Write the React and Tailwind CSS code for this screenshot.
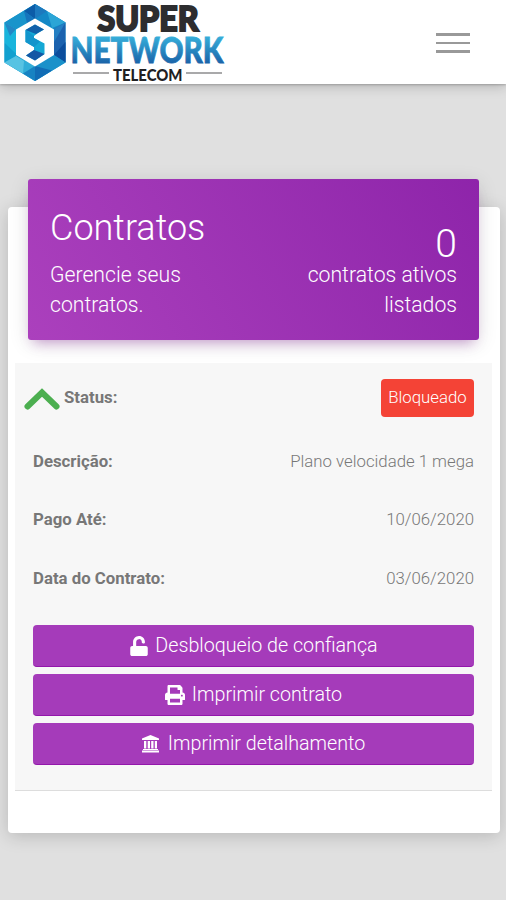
import React, { useState } from 'react';
import { FaUnlock, FaPrint } from 'react-icons/fa';

const details = [
  { label: 'Descrição:', value: 'Plano velocidade 1 mega' },
  { label: 'Pago Até:', value: '10/06/2020' },
  { label: 'Data do Contrato:', value: '03/06/2020' },
];

const Logo = () => (
  <svg className="overflow-visible" width="228" height="84" viewBox="0 0 228 84" role="img" aria-label="Super Network Telecom">
    <defs>
      <linearGradient id="network" x1="0" y1="0" x2="0" y2="1">
        <stop offset="0.200" stopColor="#38b2dc" />
        <stop offset="0.850" stopColor="#1a62a8" />
      </linearGradient>
    </defs>
    <polygon points="35,4 65.500,22.500 65.500,62.500 35,81 4.500,62.500 4.500,22.500" fill="#159fd0" />
    <polygon points="35,4 35,19 16,29 4.500,22.500" fill="#1994cb" />
    <polygon points="35,4 35,19 24,11" fill="#0c5ca8" />
    <polygon points="24,11 35,19 27,23" fill="#1675bd" />
    <polygon points="4.500,22.500 16,29 16,54 4.500,43" fill="#19b4dc" />
    <polygon points="4.500,43 16,54 16,56 4.500,62.500" fill="#12a0cf" />
    <polygon points="4.500,22.500 16,29 10,36" fill="#2387c5" />
    <polygon points="35,4 65.500,22.500 54,29 35,19" fill="#1488c6" />
    <polygon points="35,4 47,11 35,19" fill="#1c79be" />
    <polygon points="47,11 65.500,22.500 52,28" fill="#2ba5d6" />
    <polygon points="65.500,22.500 65.500,62.500 54,55 54,29" fill="#1b62ae" />
    <polygon points="65.500,22.500 54,29 54,42" fill="#247fc3" />
    <polygon points="65.500,42 65.500,62.500 54,55" fill="#0b4d9c" />
    <polygon points="65.500,62.500 35,81 35,66 54,55" fill="#1a91ca" />
    <polygon points="52,70.500 35,81 35,66" fill="#116cb5" />
    <polygon points="4.500,62.500 16,56 35,66 35,81" fill="#31add8" />
    <polygon points="4.500,62.500 16,56 24,61 23,73.500" fill="#57c3e3" />
    <polygon points="35,66 35,81 23,73.500" fill="#1782c2" />
    <polygon points="35,18.500 54,29.500 54,55 35,66.500 16,55 16,29.500" fill="#fff" />
    <polygon points="25.500,30 35,24.500 44,29.500 38,33 34,36 34,38 44.500,43.500 44.500,54 35,60.500 26,55.500 34,50 34,47 25.500,42" fill="#14a8d5" />
    <polygon points="25.500,30 35,24.500 44,29.500 36,34" fill="#1261aa" />
    <polygon points="25.500,30 34,36 34,38 40,41.500 34,47 25.500,42" fill="#1295cc" />
    <polygon points="26,55.500 34,50 44.500,54 35,60.500" fill="#1458a5" />
    <text x="97.500" y="30.500" textLength="101" lengthAdjust="spacingAndGlyphs" fontFamily="Lato, sans-serif" fontWeight="900" fontSize="34.500" fill="#2d2d2f" stroke="#2d2d2f" strokeWidth="2">SUPER</text>
    <text x="70.500" y="62.500" textLength="153" lengthAdjust="spacingAndGlyphs" fontFamily="Lato, sans-serif" fontWeight="900" fontSize="36" fill="url(#network)" stroke="url(#network)" strokeWidth="0.800">NETWORK</text>
    <text x="113" y="81" textLength="69.500" lengthAdjust="spacingAndGlyphs" fontFamily="Lato, sans-serif" fontWeight="900" fontSize="17" fill="#202022">TELECOM</text>
    <path d="M73 73H109M186 73H222" stroke="#8d8d8f" strokeWidth="1.500" />
  </svg>
);

const BankIcon = () => (
  <svg width="17" height="18" viewBox="0 0 17 18" fill="currentColor">
    <path d="M8.500 0L17 3.500V5H0V3.500Z" />
    <path d="M2 6H4.300V13.500H2ZM5.700 6H8V13.500H5.700ZM9.200 6H11.500V13.500H9.200ZM12.800 6H15V13.500H12.800Z" />
    <path d="M1 14H16V15H1ZM0 15.500H17V17.500H0Z" />
  </svg>
);

const ActionButton = ({ icon, gap, children }) => (
  <button className={`flex h-[42px] w-full items-center justify-center rounded-[4px] border-b border-[#9317ab] bg-[#a53bba] pt-[2px] text-[19.700px] font-light text-white ${gap}`}>
    {icon}
    <span>{children}</span>
  </button>
);

const App = () => {
  const [open, setOpen] = useState(true);

  return (
    <div className="h-[900px] w-[506px] overflow-hidden bg-[#e0e0e0] font-['Roboto',sans-serif]">
      <header className="relative flex h-[84px] items-center justify-between bg-white pr-9 shadow-[0_2px_12px_rgba(0,0,0,0.22),0_1px_2px_rgba(0,0,0,0.2)]">
        <Logo />
        <button className="mt-[2px] flex w-[34px] flex-col gap-[6px]" aria-label="Menu">
          <span className="h-[2.500px] w-full bg-[#999]" />
          <span className="h-[2.500px] w-full bg-[#999]" />
          <span className="h-[2.500px] w-full bg-[#999]" />
        </button>
      </header>

      <main className="mr-[6px] ml-[8px] mt-[123px] flex h-[626px] w-[492px] flex-col rounded-[4px] bg-white px-[7px] shadow-[0_3px_18px_rgba(0,0,0,0.18)]">
        <section className="-mt-7 ml-[13px] flex h-[161px] w-[451px] shrink-0 justify-between rounded-[3px] bg-linear-60 from-[#ab40bd] to-[#8e24aa] px-[22px] text-white shadow-[0_4px_20px_rgba(0,0,0,0.12),0_8px_12px_-6px_rgba(156,39,176,0.4)]">
          <div className="w-[180px] pt-[27px]">
            <h1 className="text-[36px] leading-[44px] font-light">Contratos</h1>
            <p className="mt-[10px] text-[21.200px] leading-[30px] font-light">Gerencie seus contratos.</p>
          </div>
          <div className="w-[160px] pt-[50px] text-right">
            <div className="text-[39px] leading-[31px] font-light">0</div>
            <p className="text-[21.200px] leading-[30px] font-light">contratos ativos listados</p>
          </div>
        </section>

        <section className="mt-[23px] h-[428px] w-[477px] shrink-0 border-b border-[#ddd] bg-[#f7f7f7] px-[18px] text-[16.800px]">
          <div className="flex h-[69px] items-center justify-between">
            <div className="-ml-[9px] flex items-center gap-[4px]">
              <button className="mt-[3px]" onClick={() => setOpen(!open)} aria-label="Detalhes">
                <svg width="36" height="22" viewBox="0 0 36 22" fill="none" stroke="#4caf50" strokeWidth="6" strokeLinecap="round">
                  <path d="M3.500 18.500L18 4.500L32.500 18.500" />
                </svg>
              </button>
              <span className="font-bold text-[#777]">Status:</span>
            </div>
            <span className="flex h-[38px] w-[93px] items-center justify-center rounded-[4px] bg-[#f44336] font-light text-white">Bloqueado</span>
          </div>
          {open && details.map((item) => (
            <div key={item.label} className="flex h-[58.500px] items-center justify-between">
              <span className="font-bold text-[#777]">{item.label}</span>
              <span className="font-light text-[#777]">{item.value}</span>
            </div>
          ))}
          <div className="mt-[17px] flex flex-col gap-[7px]">
            <ActionButton gap="gap-[6px]" icon={<FaUnlock className="size-5" />}>Desbloqueio de confiança</ActionButton>
            <ActionButton gap="gap-[7px]" icon={<FaPrint className="size-5" />}>Imprimir contrato</ActionButton>
            <ActionButton gap="gap-[9px]" icon={<BankIcon />}>Imprimir detalhamento</ActionButton>
          </div>
        </section>
      </main>
    </div>
  );
};

export default App;
